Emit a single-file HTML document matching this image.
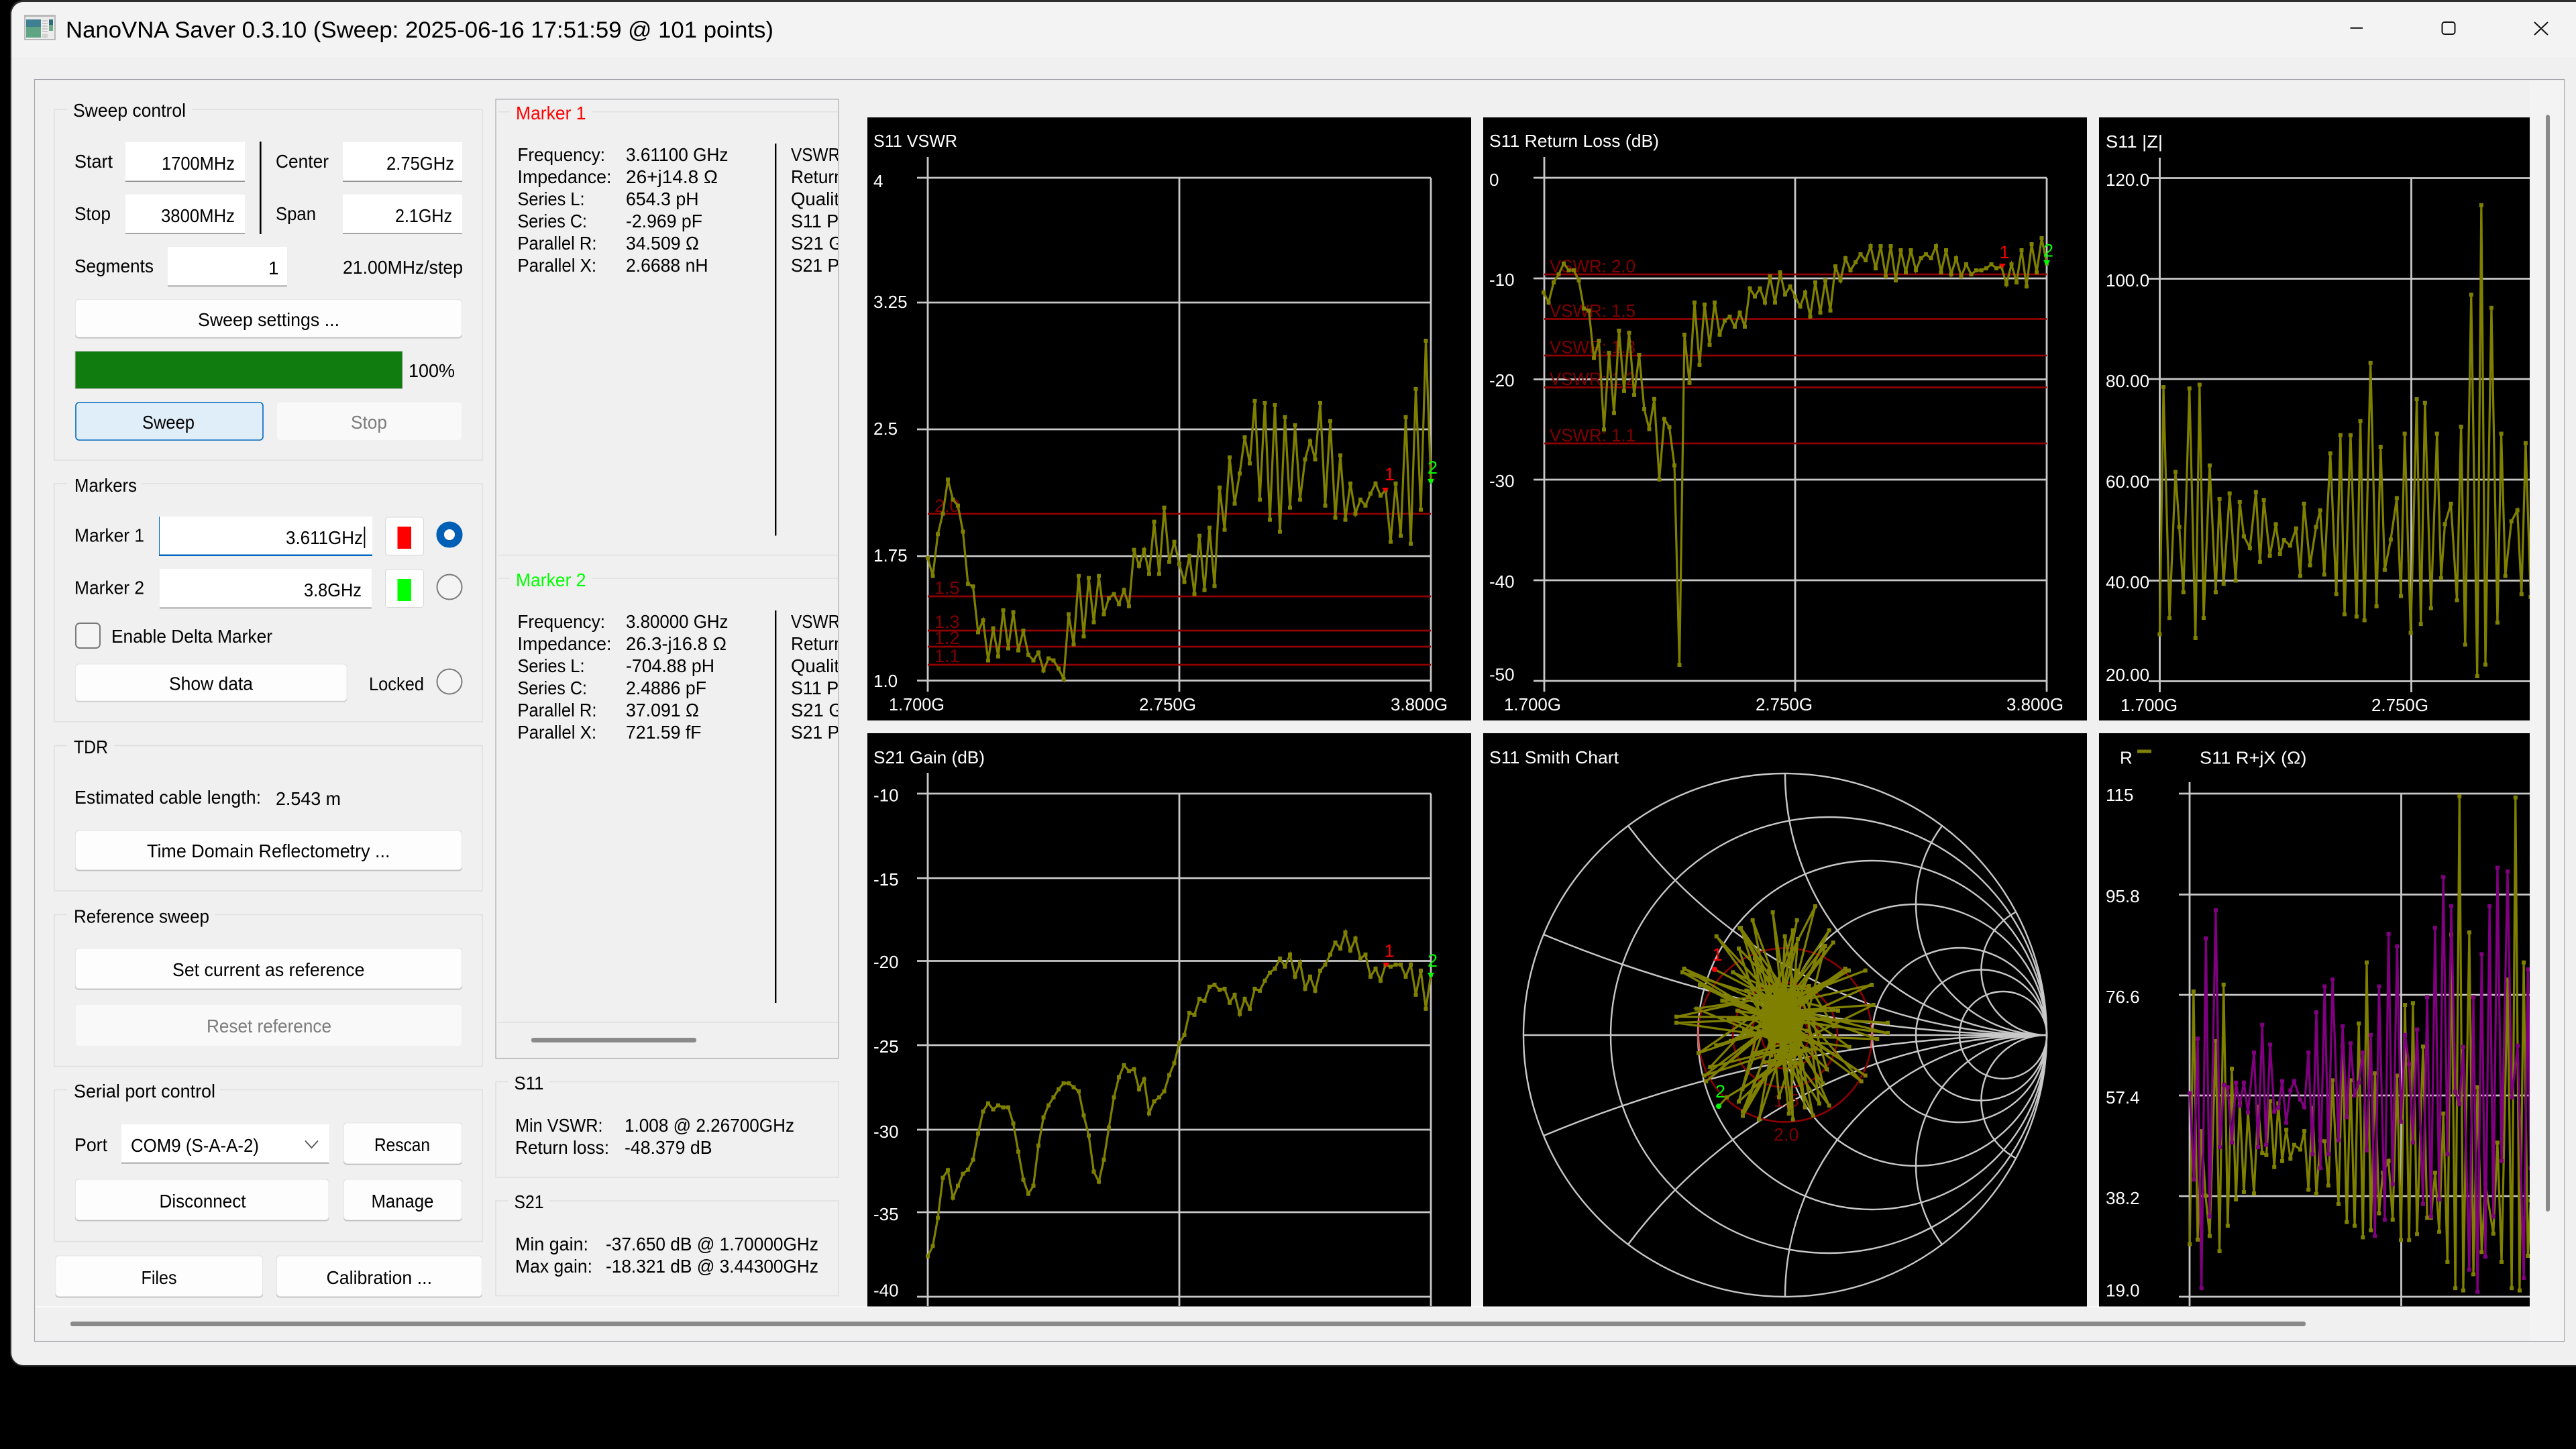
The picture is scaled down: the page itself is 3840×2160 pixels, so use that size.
<!DOCTYPE html>
<html lang="en"><head><meta charset="utf-8"><title>NanoVNA Saver 0.3.10</title>
<style>
html,body{margin:0;padding:0;background:#000;overflow:hidden;width:3840px;height:2160px}
svg{display:block}
text{font-family:"Liberation Sans",sans-serif;font-size:28px;fill:#000}
.c{font-size:26px;fill:#fff}
.d{font-size:27px;fill:#800000}
.g{fill:none;stroke:#c8c8c8;stroke-width:2.8}
.r{fill:none;stroke:#8f0000;stroke-width:2.8}
.t{fill:none;stroke:#808000;stroke-width:3.2;stroke-linejoin:miter;vector-effect:non-scaling-stroke}
.box{fill:none;stroke:#e0e0e0;stroke-width:1.6}
.dis{fill:#7c7c7c}
</style></head><body>
<svg xmlns="http://www.w3.org/2000/svg" width="3840" height="2160" viewBox="0 0 3840 2160">
<defs>
<marker id="ma" markerUnits="userSpaceOnUse" overflow="visible" markerWidth="1" markerHeight="1"><rect x="-.4" y="-5" width=".8" height="10" fill="#808000"/></marker>
<marker id="mb" markerUnits="userSpaceOnUse" overflow="visible" markerWidth="1" markerHeight="1"><rect x="-6.4" y="-4.3" width="12.8" height="8.6" fill="#808000"/></marker>
<marker id="mm" markerUnits="userSpaceOnUse" overflow="visible" markerWidth="1" markerHeight="1"><rect x="-6.4" y="-4.3" width="12.8" height="8.6" fill="#800080"/></marker>
<marker id="mc" markerUnits="userSpaceOnUse" overflow="visible" markerWidth="1" markerHeight="1"><rect x="-9" y="-9" width="18" height="18" fill="#808000"/></marker>
<clipPath id="cm"><rect x="740" y="149" width="509" height="1428"/></clipPath>
<clipPath id="c3"><rect x="3129" y="175" width="642" height="899"/></clipPath>
<clipPath id="c4"><rect x="1293" y="1093" width="900" height="854"/></clipPath>
<clipPath id="c6"><rect x="3129" y="1093" width="642" height="854"/></clipPath>
</defs>

<rect width="3840" height="2160" fill="#000"/>
<path d="M35 0H3840V2037H35a20 20 0 0 1-20-20V20a20 20 0 0 1 20-20Z" fill="#2e2e2e"/>
<path d="M35 3H3840V2035H35a18 18 0 0 1-18-18V21a18 18 0 0 1 18-18Z" fill="#f0f0f0"/>
<path d="M17 85V21a18 18 0 0 1 18-18H3840V85Z" fill="#f3f3f3"/>

<!-- icon -->
<rect x="36" y="22" width="47" height="38" fill="#b9b9b9"/>
<rect x="38" y="25" width="43" height="33" fill="#ececec"/>
<rect x="39" y="29" width="22" height="27" fill="#5fa583"/>
<rect x="39" y="29" width="22" height="11" fill="#3f7f92"/>
<rect x="73" y="29" width="6" height="8" fill="#2f6c7c"/><rect x="73" y="37" width="6" height="9" fill="#6ea88a"/>
<path d="M63 31h8M63 35h8M63 39h8M63 43h8M63 47h8M63 52h8M63 55h8" stroke="#bdbdbd" stroke-width="1.4"/>
<text x="98" y="56" style="font-size:34px" textLength="1055" lengthAdjust="spacingAndGlyphs">NanoVNA Saver 0.3.10 (Sweep: 2025-06-16 17:51:59 @ 101 points)</text>
<!-- window buttons -->
<path d="M3503.5 41.7H3522" stroke="#111" stroke-width="2" fill="none"/>
<rect x="3640.5" y="33" width="19" height="18" rx="3.5" fill="none" stroke="#111" stroke-width="2"/>
<path d="M3778 33L3798 52M3798 33L3778 52" stroke="#111" stroke-width="2" fill="none"/>

<!-- scroll frame -->
<rect x="51.5" y="118.5" width="3771" height="1881" fill="#f0f0f0" stroke="#a5a5ad" stroke-width="1.1"/>
<rect x="3771" y="120" width="51" height="1879" fill="#f3f3f3"/>
<rect x="53" y="1947" width="3718" height="2" fill="#fafafa"/>
<rect x="105" y="1970" width="3332" height="7" rx="3" fill="#8a8a8a"/>
<rect x="3795" y="171" width="6" height="1635" rx="3" fill="#8a8a8a"/>

<!-- Sweep control -->
<rect class="box" x="81" y="163" width="638" height="523"/>
<rect x="100" y="155" width="186" height="20" fill="#f0f0f0"/>
<text x="109" y="174" textLength="168" lengthAdjust="spacingAndGlyphs">Sweep control</text>
<text x="111" y="250" textLength="57" lengthAdjust="spacingAndGlyphs">Start</text>
<rect x="187" y="212" width="178" height="59" fill="#8c8c8c"/><rect x="187" y="212" width="178" height="57.5" fill="#fff"/>
<text x="241" y="253" textLength="109" lengthAdjust="spacingAndGlyphs">1700MHz</text>
<rect x="387" y="211" width="2.6" height="138" fill="#000"/>
<text x="411" y="250" textLength="79" lengthAdjust="spacingAndGlyphs">Center</text>
<rect x="511" y="212" width="178" height="59" fill="#8c8c8c"/><rect x="511" y="212" width="178" height="57.5" fill="#fff"/>
<text x="576" y="253" textLength="101" lengthAdjust="spacingAndGlyphs">2.75GHz</text>
<text x="111" y="328" textLength="54" lengthAdjust="spacingAndGlyphs">Stop</text>
<rect x="187" y="290" width="178" height="59" fill="#8c8c8c"/><rect x="187" y="290" width="178" height="57.5" fill="#fff"/>
<text x="240" y="331" textLength="110" lengthAdjust="spacingAndGlyphs">3800MHz</text>
<text x="411" y="328" textLength="60" lengthAdjust="spacingAndGlyphs">Span</text>
<rect x="511" y="290" width="178" height="59" fill="#8c8c8c"/><rect x="511" y="290" width="178" height="57.5" fill="#fff"/>
<text x="589" y="331" textLength="85" lengthAdjust="spacingAndGlyphs">2.1GHz</text>
<text x="111" y="406" textLength="118" lengthAdjust="spacingAndGlyphs">Segments</text>
<rect x="250" y="368" width="178" height="59" fill="#8c8c8c"/><rect x="250" y="368" width="178" height="57.5" fill="#fff"/>
<text x="400" y="409">1</text>
<text x="511" y="408" textLength="179" lengthAdjust="spacingAndGlyphs">21.00MHz/step</text>
<rect x="112" y="446" width="577" height="58.5" rx="5" fill="#bfbfbf"/><rect x="112.5" y="446.5" width="576" height="56" rx="5" fill="#fdfdfd" stroke="#e6e6e6"/>
<text x="295" y="486" textLength="211" lengthAdjust="spacingAndGlyphs">Sweep settings ...</text>
<rect x="112" y="523.5" width="488" height="56" fill="#107c10" stroke="#c4c4c4" stroke-width="1"/>
<text x="609" y="562" textLength="69" lengthAdjust="spacingAndGlyphs">100%</text>
<rect x="113" y="600" width="279" height="56" rx="5" fill="#e0eef9" stroke="#0067c0" stroke-width="1.6"/>
<text x="212" y="639" textLength="78" lengthAdjust="spacingAndGlyphs">Sweep</text>
<rect x="412.5" y="599.5" width="276" height="57" rx="5" fill="#f9f9f9" stroke="#f0f0f0"/>
<text class="dis" x="523" y="639" textLength="54" lengthAdjust="spacingAndGlyphs">Stop</text>

<!-- Markers -->
<rect class="box" x="81" y="721" width="638" height="355"/>
<rect x="100" y="712" width="112" height="20" fill="#f0f0f0"/>
<text x="111" y="733" textLength="93" lengthAdjust="spacingAndGlyphs">Markers</text>
<text x="111" y="807.5" textLength="104" lengthAdjust="spacingAndGlyphs">Marker 1</text>
<rect x="237" y="770" width="318" height="59" fill="#0067c0"/><rect x="238" y="770" width="317" height="56.5" fill="#fff"/>
<text x="426" y="811" textLength="115" lengthAdjust="spacingAndGlyphs">3.611GHz</text>
<rect x="542.5" y="785" width="1.8" height="32" fill="#000"/>
<rect x="574.5" y="771" width="57" height="56.5" rx="4" fill="#fdfdfd" stroke="#d8d8d8"/>
<rect x="592.5" y="785" width="20.5" height="33" fill="#f00"/>
<circle cx="670" cy="797" r="13.8" fill="#fff" stroke="#0060b5" stroke-width="11.5"/>
<text x="111" y="885.5" textLength="104" lengthAdjust="spacingAndGlyphs">Marker 2</text>
<rect x="238" y="848" width="316" height="59" fill="#8c8c8c"/><rect x="238" y="848" width="316" height="57.5" fill="#fff"/>
<text x="453" y="889" textLength="86" lengthAdjust="spacingAndGlyphs">3.8GHz</text>
<rect x="574.5" y="849" width="57" height="56.5" rx="4" fill="#fdfdfd" stroke="#d8d8d8"/>
<rect x="592.5" y="863" width="20.5" height="33" fill="#0f0"/>
<circle cx="670" cy="875" r="18.5" fill="#f4f4f4" stroke="#7a7a7a" stroke-width="2"/>
<rect x="113" y="929" width="36" height="37" rx="6" fill="#f4f4f4" stroke="#7a7a7a" stroke-width="2"/>
<text x="166" y="958" textLength="240" lengthAdjust="spacingAndGlyphs">Enable Delta Marker</text>
<rect x="112" y="989.5" width="405.5" height="57" rx="5" fill="#bfbfbf"/><rect x="112.5" y="990" width="404.5" height="55" rx="5" fill="#fdfdfd" stroke="#e6e6e6"/>
<text x="252" y="1028.5" textLength="125" lengthAdjust="spacingAndGlyphs">Show data</text>
<text x="550" y="1029" textLength="82" lengthAdjust="spacingAndGlyphs">Locked</text>
<circle cx="670" cy="1016" r="18.5" fill="#f4f4f4" stroke="#7a7a7a" stroke-width="2"/>

<!-- TDR -->
<rect class="box" x="81" y="1111.5" width="638" height="216.5"/>
<rect x="100" y="1102" width="70" height="20" fill="#f0f0f0"/>
<text x="110" y="1123" textLength="51" lengthAdjust="spacingAndGlyphs">TDR</text>
<text x="111" y="1198" textLength="278" lengthAdjust="spacingAndGlyphs">Estimated cable length:</text>
<text x="411" y="1200" textLength="97" lengthAdjust="spacingAndGlyphs">2.543 m</text>
<rect x="112" y="1238" width="577" height="60.5" rx="5" fill="#bfbfbf"/><rect x="112.5" y="1238.5" width="576" height="58" rx="5" fill="#fdfdfd" stroke="#e6e6e6"/>
<text x="219" y="1278" textLength="362.5" lengthAdjust="spacingAndGlyphs">Time Domain Reflectometry ...</text>

<!-- Reference -->
<rect class="box" x="81" y="1363.5" width="638" height="226"/>
<rect x="100" y="1354" width="220" height="20" fill="#f0f0f0"/>
<text x="110" y="1375.5" textLength="202" lengthAdjust="spacingAndGlyphs">Reference sweep</text>
<rect x="112" y="1413" width="577" height="62.5" rx="5" fill="#bfbfbf"/><rect x="112.5" y="1413.5" width="576" height="60" rx="5" fill="#fdfdfd" stroke="#e6e6e6"/>
<text x="257" y="1455" textLength="286.5" lengthAdjust="spacingAndGlyphs">Set current as reference</text>
<rect x="112.5" y="1497.5" width="576" height="62" rx="5" fill="#f9f9f9" stroke="#f0f0f0"/>
<text class="dis" x="308" y="1539" textLength="186" lengthAdjust="spacingAndGlyphs">Reset reference</text>

<!-- Serial -->
<rect class="box" x="81" y="1624.5" width="638" height="226"/>
<rect x="100" y="1615" width="228" height="20" fill="#f0f0f0"/>
<text x="110" y="1636" textLength="211" lengthAdjust="spacingAndGlyphs">Serial port control</text>
<text x="111" y="1716" textLength="49" lengthAdjust="spacingAndGlyphs">Port</text>
<rect x="181" y="1676" width="309.5" height="58.5" fill="#8c8c8c"/><rect x="181" y="1676" width="309.5" height="57" fill="#fff"/>
<text x="195" y="1717" textLength="191" lengthAdjust="spacingAndGlyphs">COM9 (S-A-A-2)</text>
<path d="M455 1700.5L464.5 1711L474 1700.5" fill="none" stroke="#555" stroke-width="1.8"/>
<rect x="512" y="1673.5" width="177" height="63" rx="5" fill="#bfbfbf"/><rect x="512.5" y="1674" width="176" height="60.5" rx="5" fill="#fdfdfd" stroke="#e6e6e6"/>
<text x="558" y="1716" textLength="83" lengthAdjust="spacingAndGlyphs">Rescan</text>
<rect x="112" y="1757.5" width="378.5" height="63" rx="5" fill="#bfbfbf"/><rect x="112.5" y="1758" width="377.5" height="60.5" rx="5" fill="#fdfdfd" stroke="#e6e6e6"/>
<text x="237.5" y="1800" textLength="129" lengthAdjust="spacingAndGlyphs">Disconnect</text>
<rect x="512" y="1757.5" width="177" height="63" rx="5" fill="#bfbfbf"/><rect x="512.5" y="1758" width="176" height="60.5" rx="5" fill="#fdfdfd" stroke="#e6e6e6"/>
<text x="553.5" y="1800" textLength="93" lengthAdjust="spacingAndGlyphs">Manage</text>
<rect x="82.5" y="1871.5" width="309.5" height="63" rx="5" fill="#bfbfbf"/><rect x="83" y="1872" width="308.5" height="60.5" rx="5" fill="#fdfdfd" stroke="#e6e6e6"/>
<text x="210.5" y="1914" textLength="53" lengthAdjust="spacingAndGlyphs">Files</text>
<rect x="412" y="1871.5" width="307" height="63" rx="5" fill="#bfbfbf"/><rect x="412.5" y="1872" width="306" height="60.5" rx="5" fill="#fdfdfd" stroke="#e6e6e6"/>
<text x="486.5" y="1914" textLength="157.5" lengthAdjust="spacingAndGlyphs">Calibration ...</text>

<!-- Marker panel -->
<rect x="739" y="148" width="511" height="1429.5" fill="#f0f0f0" stroke="#a5a5ad" stroke-width="1.1"/>
<g clip-path="url(#cm)">
<path d="M742 166.7H1250M742 827.5H1250M742 862H1250M742 1524H1250" stroke="#e0e0e0" stroke-width="1.6" fill="none"/>
<rect x="760" y="158" width="122" height="20" fill="#f0f0f0"/>
<text x="769" y="178" textLength="104.5" lengthAdjust="spacingAndGlyphs" style="fill:#f00">Marker 1</text>
<text x="771.5" y="240" textLength="130.5" lengthAdjust="spacingAndGlyphs">Frequency:</text>
<text x="771.5" y="273" textLength="140" lengthAdjust="spacingAndGlyphs">Impedance:</text>
<text x="771.5" y="306" textLength="100" lengthAdjust="spacingAndGlyphs">Series L:</text>
<text x="771.5" y="339" textLength="103.5" lengthAdjust="spacingAndGlyphs">Series C:</text>
<text x="771.5" y="372" textLength="118" lengthAdjust="spacingAndGlyphs">Parallel R:</text>
<text x="771.5" y="405" textLength="117.5" lengthAdjust="spacingAndGlyphs">Parallel X:</text>
<text x="933" y="240" textLength="152.5" lengthAdjust="spacingAndGlyphs">3.61100 GHz</text>
<text x="933" y="273" textLength="137" lengthAdjust="spacingAndGlyphs">26+j14.8 Ω</text>
<text x="933" y="306" textLength="108.5" lengthAdjust="spacingAndGlyphs">654.3 pH</text>
<text x="933" y="339" textLength="114" lengthAdjust="spacingAndGlyphs">-2.969 pF</text>
<text x="933" y="372" textLength="109" lengthAdjust="spacingAndGlyphs">34.509 Ω</text>
<text x="933" y="405" textLength="122.5" lengthAdjust="spacingAndGlyphs">2.6688 nH</text>
<rect x="1155" y="214" width="2.4" height="584.5" fill="#000"/>
<text x="1179" y="240" textLength="80" lengthAdjust="spacingAndGlyphs">VSWR:</text>
<text x="1179" y="273" textLength="140" lengthAdjust="spacingAndGlyphs">Return loss:</text>
<text x="1179" y="306" textLength="170" lengthAdjust="spacingAndGlyphs">Quality factor:</text>
<text x="1179" y="339" textLength="137" lengthAdjust="spacingAndGlyphs">S11 Phase:</text>
<text x="1179" y="372" textLength="122" lengthAdjust="spacingAndGlyphs">S21 Gain:</text>
<text x="1179" y="405" textLength="137" lengthAdjust="spacingAndGlyphs">S21 Phase:</text>
<rect x="760" y="853" width="122" height="20" fill="#f0f0f0"/>
<text x="769" y="874" textLength="104.5" lengthAdjust="spacingAndGlyphs" style="fill:#0f0">Marker 2</text>
<text x="771.5" y="936" textLength="130.5" lengthAdjust="spacingAndGlyphs">Frequency:</text>
<text x="771.5" y="969" textLength="140" lengthAdjust="spacingAndGlyphs">Impedance:</text>
<text x="771.5" y="1002" textLength="100" lengthAdjust="spacingAndGlyphs">Series L:</text>
<text x="771.5" y="1035" textLength="103.5" lengthAdjust="spacingAndGlyphs">Series C:</text>
<text x="771.5" y="1068" textLength="118" lengthAdjust="spacingAndGlyphs">Parallel R:</text>
<text x="771.5" y="1101" textLength="117.5" lengthAdjust="spacingAndGlyphs">Parallel X:</text>
<text x="933" y="936" textLength="152.5" lengthAdjust="spacingAndGlyphs">3.80000 GHz</text>
<text x="933" y="969" textLength="150" lengthAdjust="spacingAndGlyphs">26.3-j16.8 Ω</text>
<text x="933" y="1002" textLength="132" lengthAdjust="spacingAndGlyphs">-704.88 pH</text>
<text x="933" y="1035" textLength="120" lengthAdjust="spacingAndGlyphs">2.4886 pF</text>
<text x="933" y="1068" textLength="109" lengthAdjust="spacingAndGlyphs">37.091 Ω</text>
<text x="933" y="1101" textLength="112.5" lengthAdjust="spacingAndGlyphs">721.59 fF</text>
<rect x="1155" y="910" width="2.4" height="585" fill="#000"/>
<text x="1179" y="936" textLength="80" lengthAdjust="spacingAndGlyphs">VSWR:</text>
<text x="1179" y="969" textLength="140" lengthAdjust="spacingAndGlyphs">Return loss:</text>
<text x="1179" y="1002" textLength="170" lengthAdjust="spacingAndGlyphs">Quality factor:</text>
<text x="1179" y="1035" textLength="137" lengthAdjust="spacingAndGlyphs">S11 Phase:</text>
<text x="1179" y="1068" textLength="122" lengthAdjust="spacingAndGlyphs">S21 Gain:</text>
<text x="1179" y="1101" textLength="137" lengthAdjust="spacingAndGlyphs">S21 Phase:</text>
<rect x="792" y="1547" width="246" height="7" rx="3" fill="#8a8a8a"/>
</g>

<!-- S11/S21 boxes -->
<rect class="box" x="739" y="1612.5" width="511" height="142.5"/>
<rect x="757" y="1603" width="62" height="20" fill="#f0f0f0"/>
<text x="766.5" y="1624" textLength="44" lengthAdjust="spacingAndGlyphs">S11</text>
<text x="768" y="1687" textLength="130.5" lengthAdjust="spacingAndGlyphs">Min VSWR:</text>
<text x="931" y="1687" textLength="253" lengthAdjust="spacingAndGlyphs">1.008 @ 2.26700GHz</text>
<text x="768" y="1720" textLength="140" lengthAdjust="spacingAndGlyphs">Return loss:</text>
<text x="931" y="1720" textLength="130.5" lengthAdjust="spacingAndGlyphs">-48.379 dB</text>
<rect class="box" x="739" y="1790" width="511" height="141.5"/>
<rect x="757" y="1780" width="62" height="20" fill="#f0f0f0"/>
<text x="766.5" y="1801" textLength="44" lengthAdjust="spacingAndGlyphs">S21</text>
<text x="768" y="1864" textLength="109" lengthAdjust="spacingAndGlyphs">Min gain:</text>
<text x="903" y="1864" textLength="317" lengthAdjust="spacingAndGlyphs">-37.650 dB @ 1.70000GHz</text>
<text x="768" y="1897" textLength="115" lengthAdjust="spacingAndGlyphs">Max gain:</text>
<text x="903" y="1897" textLength="317" lengthAdjust="spacingAndGlyphs">-18.321 dB @ 3.44300GHz</text>

<!-- chart backgrounds -->
<rect x="1293" y="175" width="900" height="899" fill="#000"/>
<rect x="2211" y="175" width="900" height="899" fill="#000"/>
<rect x="3129" y="175" width="642" height="899" fill="#000"/>
<rect x="1293" y="1093" width="900" height="854.5" fill="#000"/>
<rect x="2211" y="1093" width="900" height="854.5" fill="#000"/>
<rect x="3129" y="1093" width="642" height="854.5" fill="#000"/>

<!-- Chart 1 VSWR -->
<text class="c" x="1302" y="219" textLength="125" lengthAdjust="spacingAndGlyphs">S11 VSWR</text>
<path class="g" d="M1383 234V1031M1758 265V1031M2133 265V1031M1367 265H2133M1367 451H2133M1367 640H2133M1367 829H2133M1367 1014.5H2133"/>
<path class="r" d="M1383 766H2133M1383 889H2133M1383 940H2133M1383 964H2133M1383 991H2133"/>
<text class="d" x="1393" y="763">2.0</text><text class="d" x="1393" y="885.5">1.5</text><text class="d" x="1393" y="936">1.3</text><text class="d" x="1393" y="960">1.2</text><text class="d" x="1393" y="987">1.1</text>
<text class="c" x="1302" y="279">4</text><text class="c" x="1302" y="459">3.25</text><text class="c" x="1302" y="648">2.5</text><text class="c" x="1302" y="837">1.75</text><text class="c" x="1302" y="1024">1.0</text>
<text class="c" x="1325" y="1059" textLength="83" lengthAdjust="spacingAndGlyphs">1.700G</text><text class="c" x="1698" y="1059" textLength="85" lengthAdjust="spacingAndGlyphs">2.750G</text><text class="c" x="2073" y="1059" textLength="85" lengthAdjust="spacingAndGlyphs">3.800G</text>
<polyline class="t" transform="matrix(7.5 0 0 .5995 1383 150)" marker-start="url(#ma)" marker-mid="url(#ma)" marker-end="url(#ma)" points="0,1137 1,1182 2,1078 3,1027 4,942 5,992 6,1007 7,1072 8,1202 9,1208 10,1322 11,1292 12,1392 13,1312 14,1382 15,1267 16,1362 17,1272 18,1367 19,1318 20,1378 21,1392 22,1372 23,1417 24,1387 25,1392 26,1412 27,1438 28,1277 29,1352 30,1182 31,1332 32,1187 33,1297 34,1182 35,1277 36,1237 37,1227 38,1252 39,1217 40,1257 41,1117 42,1157 43,1117 44,1177 45,1047 46,1177 47,1012 48,1147 49,1097 50,1152 51,1197 52,1132 53,1227 54,1082 55,1217 56,1062 57,1207 58,962 59,1067 60,887 61,1002 62,927 63,837 64,902 65,747 66,992 67,752 68,1042 69,757 70,1072 71,787 72,1012 73,807 74,992 75,892 76,847 77,892 78,752 79,1007 80,797 81,1037 82,882 83,1042 84,952 85,1027 86,992 87,1007 88,977 89,952 90,982 91,968 92,1097 93,952 94,1082 95,787 96,1102 97,717 98,1017 99,597 100,945"/>
<polygon points="2060,727 2070,727 2065,734" fill="#f00"/><polygon points="2128,714 2138,714 2133,722" fill="#0f0"/>
<text x="2064" y="716" style="font-size:27px;fill:#f00">1</text><text x="2128" y="706" style="font-size:27px;fill:#0f0">2</text>

<!-- Chart 2 Return Loss -->
<text class="c" x="2220" y="219" textLength="253" lengthAdjust="spacingAndGlyphs">S11 Return Loss (dB)</text>
<path class="g" d="M2302 234V1031M2676 265V1031M3051 265V1031M2286 265H3051M2286 415H3051M2286 565.5H3051M2286 715H3051M2286 865H3051M2286 1015H3051"/>
<path class="r" d="M2302 409H3051M2302 475.5H3051M2302 530H3051M2302 577.5H3051M2302 661H3051"/>
<text class="d" x="2310" y="406" textLength="128" lengthAdjust="spacingAndGlyphs">VSWR: 2.0</text><text class="d" x="2310" y="472.5" textLength="128" lengthAdjust="spacingAndGlyphs">VSWR: 1.5</text><text class="d" x="2310" y="526.5" textLength="128" lengthAdjust="spacingAndGlyphs">VSWR: 1.3</text><text class="d" x="2310" y="574" textLength="128" lengthAdjust="spacingAndGlyphs">VSWR: 1.2</text><text class="d" x="2310" y="658" textLength="128" lengthAdjust="spacingAndGlyphs">VSWR: 1.1</text>
<text class="c" x="2220" y="277">0</text><text class="c" x="2220" y="426">-10</text><text class="c" x="2220" y="576">-20</text><text class="c" x="2220" y="726">-30</text><text class="c" x="2220" y="876">-40</text><text class="c" x="2220" y="1014.5">-50</text>
<text class="c" x="2242" y="1059" textLength="85" lengthAdjust="spacingAndGlyphs">1.700G</text><text class="c" x="2617" y="1059" textLength="85" lengthAdjust="spacingAndGlyphs">2.750G</text><text class="c" x="2991" y="1059" textLength="85" lengthAdjust="spacingAndGlyphs">3.800G</text>
<polyline class="t" transform="matrix(7.5 0 0 .5995 2301 150)" marker-start="url(#ma)" marker-mid="url(#ma)" marker-end="url(#ma)" points="0,477 1,502 2,452 3,432 4,405 5,422 6,422 7,447 8,517 9,522 10,640 11,597 12,818 13,627 14,777 15,572 16,722 17,577 18,732 19,632 20,767 21,817 22,742 23,942 24,792 25,812 26,907 27,1403 28,582 29,702 30,502 31,657 32,507 33,607 34,502 35,582 36,547 37,537 38,562 39,527 40,562 41,467 42,487 43,467 44,502 45,437 46,502 47,427 48,482 49,462 50,487 51,512 52,477 53,537 54,452 55,527 56,447 57,522 58,412 59,447 60,392 61,422 62,402 63,382 64,397 65,362 66,417 67,362 68,437 69,362 70,447 71,372 72,427 73,372 74,422 75,392 76,382 77,392 78,362 79,427 80,372 81,432 82,392 83,437 84,407 85,432 86,422 87,422 88,417 89,407 90,417 91,413 92,457 93,407 94,452 95,372 96,462 97,357 98,427 99,342 100,405"/>
<polygon points="2980,393 2990,393 2985,400" fill="#f00"/><polygon points="3046,388 3056,388 3051,396" fill="#0f0"/>
<text x="2980.5" y="385" style="font-size:27px;fill:#f00">1</text><text x="3046" y="382.5" style="font-size:27px;fill:#0f0">2</text>

<!-- Chart 3 |Z| -->
<g clip-path="url(#c3)">
<text class="c" x="3139" y="220" textLength="85" lengthAdjust="spacingAndGlyphs">S11 |Z|</text>
<path class="g" d="M3219.5 235V1032M3594.5 265V1032M3203 265.5H3771M3203 415.5H3771M3203 565H3771M3203 715H3771M3203 865.5H3771M3203 1015.5H3771"/>
<text class="c" x="3139" y="277">120.0</text><text class="c" x="3139" y="427">100.0</text><text class="c" x="3139" y="577">80.00</text><text class="c" x="3139" y="727">60.00</text><text class="c" x="3139" y="877">40.00</text><text class="c" x="3139" y="1015">20.00</text>
<text class="c" x="3161" y="1060" textLength="85" lengthAdjust="spacingAndGlyphs">1.700G</text><text class="c" x="3535" y="1060" textLength="85" lengthAdjust="spacingAndGlyphs">2.750G</text>
<polyline class="t" transform="matrix(.4719 0 0 .6952 3100 0)" marker-start="url(#mb)" marker-mid="url(#mb)" marker-end="url(#mb)" points="253,1360 265,830 284,1325 303,1012 315,1130 328,1270 347,833 366,1368 379,825 392,1325 411,998 430,1270 442,1070 455,1252 474,1058 493,1245 506,1076 519,1150 538,1175 557,1055 570,1205 582,1072 601,1192 620,1124 633,1188 646,1158 665,1170 684,1133 697,1235 709,1080 728,1212 747,1130 760,1094 773,1232 792,972 811,1274 824,933 837,1317 856,933 875,1322 887,903 900,1330 919,778 938,1300 951,958 964,1222 983,1157 1002,1068 1015,1278 1027,930 1046,1357 1065,856 1078,1338 1091,864 1110,1304 1129,930 1142,1240 1154,1124 1173,1080 1192,1287 1205,915 1218,1382 1237,632 1256,1450 1269,440 1282,1425 1301,660 1320,1335 1332,930 1345,1235 1364,1118 1383,1094 1396,1274 1409,950 1425,1280"/>
</g>

<!-- Chart 4 S21 Gain -->
<g clip-path="url(#c4)">
<text class="c" x="1302" y="1138" textLength="166" lengthAdjust="spacingAndGlyphs">S21 Gain (dB)</text>
<path class="g" d="M1383 1152V1947M1758 1183V1947M2133 1183V1947M1367 1183H2133M1367 1309H2133M1367 1432.5H2133M1367 1558H2133M1367 1684H2133M1367 1807H2133M1367 1933H2133"/>
<text class="c" x="1302" y="1194.5">-10</text><text class="c" x="1302" y="1320">-15</text><text class="c" x="1302" y="1443">-20</text><text class="c" x="1302" y="1569">-25</text><text class="c" x="1302" y="1696">-30</text><text class="c" x="1302" y="1819">-35</text><text class="c" x="1302" y="1932.5">-40</text>
<polyline class="t" transform="matrix(7.5 0 0 .5995 1383 1080)" marker-start="url(#ma)" marker-mid="url(#ma)" marker-end="url(#ma)" points="0,1322 1,1297 2,1227 3,1127 4,1108 5,1177 6,1147 7,1117 8,1107 9,1082 10,1017 11,962 12,942 13,957 14,947 15,952 16,952 17,992 18,1062 19,1132 20,1167 21,1147 22,1047 23,977 24,947 25,927 26,907 27,892 28,892 29,902 30,912 31,972 32,1022 33,1112 34,1137 35,1082 36,1002 37,927 38,877 39,847 40,862 41,857 42,907 43,882 44,967 45,937 46,927 47,912 48,872 49,842 50,792 51,772 52,717 53,722 54,682 55,687 56,652 57,647 58,660 59,657 60,692 61,672 62,720 63,682 64,707 65,657 66,662 67,637 68,617 69,607 70,582 71,602 72,572 73,627 74,592 75,657 76,627 77,662 78,612 79,597 80,572 81,542 82,557 83,517 84,562 85,532 86,582 87,572 88,627 89,607 90,637 91,597 92,602 93,597 94,597 95,627 96,597 97,672 98,612 99,707 100,622"/>
<polygon points="2061.5,1435 2071.5,1435 2066.5,1442" fill="#f00"/><polygon points="2128,1450 2138,1450 2133,1458" fill="#0f0"/>
<text x="2063.5" y="1426.5" style="font-size:27px;fill:#f00">1</text><text x="2128" y="1441" style="font-size:27px;fill:#0f0">2</text>
</g>

<!-- Chart 5 Smith -->
<text class="c" x="2220" y="1138" textLength="193" lengthAdjust="spacingAndGlyphs">S11 Smith Chart</text>
<g fill="none" stroke="#c8c8c8" stroke-width="2.4">
<circle cx="2726" cy="1543" r="325"/><circle cx="2791" cy="1543" r="260"/><circle cx="2856" cy="1543" r="195"/><circle cx="2921" cy="1543" r="130"/><circle cx="2953.5" cy="1543" r="97.5"/><circle cx="2986" cy="1543" r="65"/>
<path d="M2661 1153A390 390 0 0 0 3051 1543A390 390 0 0 0 2661 1933"/>
<path d="M2427 1231A780 780 0 0 0 3051 1543A780 780 0 0 0 2427 1855"/>
<path d="M2301 1393A1950 1950 0 0 0 3051 1543A1950 1950 0 0 0 2301 1693"/>
<path d="M2895 1231A195 195 0 0 0 3051 1543A195 195 0 0 0 2895 1855"/>
<path d="M3005 1359.5A97.5 97.5 0 0 0 3051 1543A97.5 97.5 0 0 0 3005 1726.5"/>
<path d="M2271 1543H3051"/>
<circle cx="2661" cy="1543" r="390"/>
</g>
<g fill="none" stroke="#8f0000" stroke-width="2.6"><circle cx="2661" cy="1543" r="129.5"/><circle cx="2661" cy="1543" r="78"/><circle cx="2661" cy="1543" r="50"/><circle cx="2661" cy="1543" r="35"/><circle cx="2661" cy="1543" r="18"/></g>
<path d="M2532 1520Q2530.5 1545 2534 1568M2790 1528Q2791 1545 2789 1562" fill="none" stroke="#e06060" stroke-width="2.6"/>
<text class="d" x="2644" y="1700.5">2.0</text><text class="d" x="2644" y="1649.5">1.5</text>
<ellipse cx="2656" cy="1520" rx="30" ry="36" fill="#808000"/>
<polyline class="t" transform="matrix(.33333 0 0 .33333 2480 1330)" marker-mid="url(#mc)" marker-end="url(#mc)" points="228,345 470,470 678,63 540,600 488,90 560,560 398,125 500,620 596,125 520,500 340,160 610,600 236,197 560,640 578,170 470,560 345,160 600,520 542,197 520,660 740,170 450,610 758,225 580,470 600,210 480,690 336,252 640,560 722,240 500,520 92,342 610,650 84,358 480,480 310,358 620,500 812,342 440,600 828,350 560,480 902,350 450,520 930,414 520,600 162,414 640,620 262,485 600,450 147,521 560,690 938,504 430,540 780,530 500,460 57,557 650,560 57,584 520,650 290,565 600,560 1002,584 440,560 1002,630 560,520 955,657 470,640 830,692 520,470 156,720 620,560 235,685 560,600 300,665 640,480 730,792 430,500 902,820 500,560 884,846 530,440 208,782 610,680 182,820 580,520 190,846 620,470 712,855 480,520 352,880 590,700 336,936 470,440 516,917 640,530 696,945 450,560 740,954 530,480 632,962 570,440 354,980 610,560 354,1000 500,600 426,1016 620,430 560,990 500,440 578,1016 560,470 668,998 440,480 408,295 540,700 370,440 700,430 420,640 720,520 360,620 600,660 400,720 680,700 450,760 620,770 540,400 520,740 600,350 480,730 470,350 600,720 420,420 650,420 760,600 330,530 640,700 282,917"/>
<path d="M2574 1636L2562 1649" fill="none" stroke="#808000" stroke-width="3"/>
<circle cx="2556" cy="1445" r="4" fill="#f00"/><circle cx="2562" cy="1649" r="4" fill="#0f0"/>
<text x="2552.5" y="1432" style="font-size:27px;fill:#f00">1</text><text x="2557" y="1636" style="font-size:27px;fill:#0f0">2</text>

<!-- Chart 6 R+jX -->
<g clip-path="url(#c6)">
<text class="c" x="3160" y="1138.5">R</text>
<rect x="3186" y="1117.5" width="21" height="5" fill="#808000"/>
<text class="c" x="3279" y="1138.5" textLength="159.5" lengthAdjust="spacingAndGlyphs">S11 R+jX (Ω)</text>
<path class="g" d="M3264 1166V1947M3579.5 1183V1947M3248 1183H3771M3248 1333.5H3771M3248 1483H3771M3248 1633H3771M3248 1783H3771M3248 1933H3771"/>
<text class="c" x="3139" y="1194">115</text><text class="c" x="3139" y="1345">95.8</text><text class="c" x="3139" y="1495">76.6</text><text class="c" x="3139" y="1645">57.4</text><text class="c" x="3139" y="1795">38.2</text><text class="c" x="3139" y="1932.5">19.0</text>
<polyline class="t" transform="matrix(.4719 0 0 .6887 3100 1080)" marker-start="url(#mb)" marker-mid="url(#mb)" marker-end="url(#mb)" points="348,1125 360,578 373,1115 385,880 398,1020 411,1107 430,685 442,1140 455,563 468,1085 481,745 494,1028 506,820 519,1012 532,840 551,1015 564,827 577,928 590,932 602,815 615,958 628,820 640,945 653,877 666,940 678,910 697,920 710,880 723,1007 736,830 748,1016 761,900 774,902 786,998 799,770 818,1038 831,695 844,1077 856,770 869,1085 882,647 895,1110 907,515 920,1095 933,755 946,1058 958,970 976,945 989,1072 1003,760 1015,1116 1028,607 1041,1116 1053,603 1066,1103 1085,697 1098,1068 1110,1068 1123,970 1136,1098 1149,842 1162,1163 1174,455 1187,1220 1200,155 1212,1225 1231,450 1244,1190 1257,785 1270,1142 1282,995 1307,1102 1320,905 1333,1163 1352,552 1365,1220 1377,158 1390,1225 1403,515 1416,1150 1425,1030"/>
<polyline class="t" style="stroke:#800080" transform="matrix(.4719 0 0 .6887 3100 1080)" marker-start="url(#mm)" marker-mid="url(#mm)" marker-end="url(#mm)" points="348,798 361,985 373,680 385,1220 399,463 411,1065 430,402 443,915 456,780 468,785 481,905 494,775 506,825 519,775 532,840 551,710 564,915 577,650 589,910 602,693 615,838 628,830 640,772 653,862 666,792 678,772 697,812 710,828 723,710 736,930 748,623 761,960 774,567 786,930 799,552 818,900 831,653 844,850 856,690 869,803 882,775 895,710 907,922 920,672 933,1107 946,567 964,1072 976,453 989,995 1003,480 1015,860 1028,672 1041,735 1053,905 1066,660 1085,1038 1098,590 1110,1065 1123,440 1136,1028 1149,330 1162,930 1174,393 1187,795 1200,822 1212,698 1231,1180 1244,590 1257,1228 1270,497 1282,1152 1295,393 1307,1065 1320,310 1333,945 1352,318 1365,807 1384,695 1403,1198 1416,530 1425,960"/>
</g>
</svg>
</body></html>
